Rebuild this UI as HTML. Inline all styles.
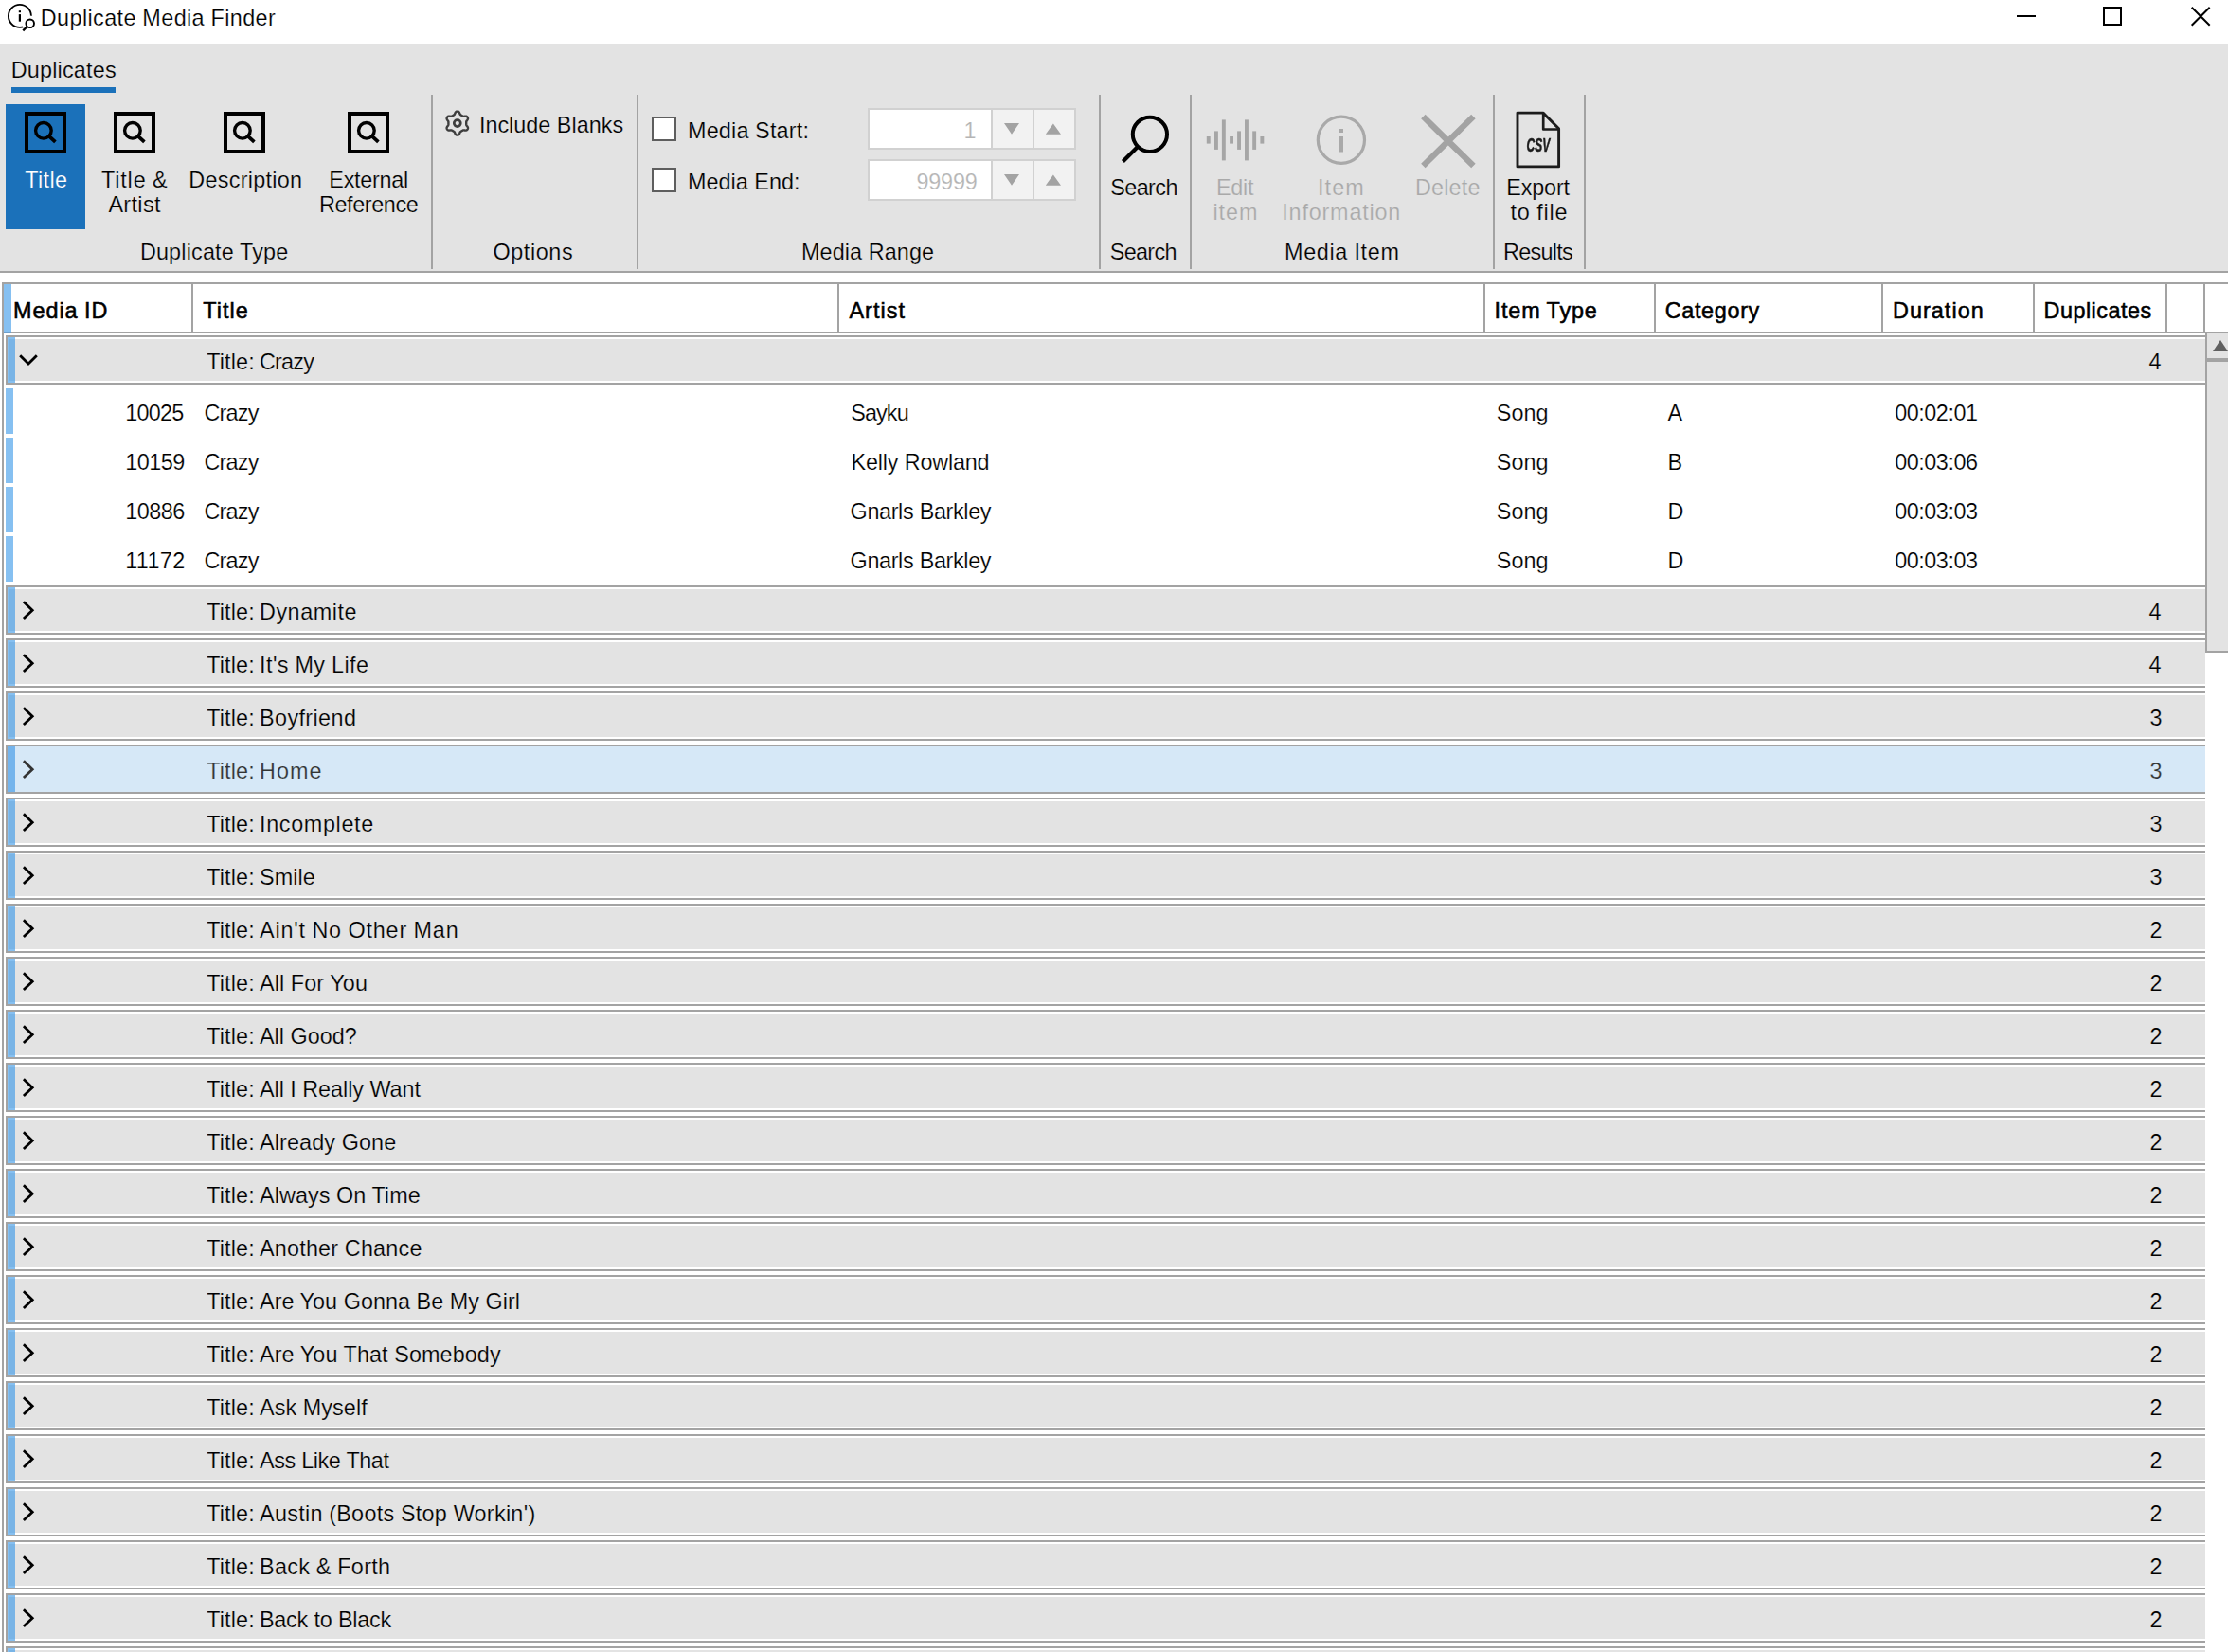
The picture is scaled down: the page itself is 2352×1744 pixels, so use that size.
<!DOCTYPE html>
<html lang="en"><head><meta charset="utf-8"><title>Duplicate Media Finder</title><style>
html,body{margin:0;padding:0}
body{width:2352px;height:1744px;position:relative;overflow:hidden;background:#fff;
font-family:"Liberation Sans",sans-serif;font-size:23.4px;color:#000}
body>div,body>svg,body>span{position:absolute}
.t{white-space:pre;line-height:30px}
</style></head><body>
<div style="left:0px;top:46px;width:2352px;height:240px;background:#e3e3e3;"></div>
<div style="left:0px;top:286px;width:2352px;height:2px;background:#a3a3a3;"></div>
<div style="left:12px;top:92px;width:110px;height:6px;background:#1b71ba;"></div>
<div style="left:6px;top:110px;width:84px;height:132px;background:#1b71ba;"></div>
<div style="left:455px;top:100px;width:2px;height:184px;background:#a3a3a3;"></div>
<div style="left:672px;top:100px;width:2px;height:184px;background:#a3a3a3;"></div>
<div style="left:1160px;top:100px;width:2px;height:184px;background:#a3a3a3;"></div>
<div style="left:1256px;top:100px;width:2px;height:184px;background:#a3a3a3;"></div>
<div style="left:1576px;top:100px;width:2px;height:184px;background:#a3a3a3;"></div>
<div style="left:1672px;top:100px;width:2px;height:184px;background:#a3a3a3;"></div>
<svg style="left:4px;top:0px" width="40" height="40" viewBox="0 0 40 40" >
<g fill="none" stroke="#000" stroke-width="1.9">
<circle cx="16.9" cy="16.9" r="12"/>
<circle cx="27.7" cy="24.8" r="8.3" fill="#fff" stroke="none"/>
<circle cx="27.7" cy="24.8" r="4.3"/>
<path d="M24.6 28 L20.3 32.4" stroke-width="2.4"/>
</g>
<rect x="15.8" y="11.2" width="2.2" height="2" fill="#000"/>
<rect x="15.8" y="15.1" width="2.2" height="7.6" fill="#000"/></svg>
<div style="left:2129px;top:16px;width:20px;height:2px;background:#000;"></div>
<div style="left:2220px;top:7px;width:16px;height:16px;background:transparent;border:2px solid #000;"></div>
<svg style="left:2308px;top:2px" width="30" height="30" viewBox="0 0 30 30" ><path d="M5.7 5.7 L24.7 24.7 M24.7 5.7 L5.7 24.7" stroke="#000" stroke-width="2" fill="none"/></svg>
<svg style="left:26px;top:118px;filter:blur(0.4px)" width="44" height="44" viewBox="0 0 44 44" ><g fill="none" stroke="#000">
<rect x="2" y="2" width="40" height="40" stroke-width="4"/>
<circle cx="19.9" cy="19.8" r="8.3" stroke-width="3.4"/>
<path d="M25.6 25.6 L32.4 31.8" stroke-width="3.8"/></g></svg>
<svg style="left:120px;top:118px;filter:blur(0.4px)" width="44" height="44" viewBox="0 0 44 44" ><g fill="none" stroke="#000">
<rect x="2" y="2" width="40" height="40" stroke-width="4"/>
<circle cx="19.9" cy="19.8" r="8.3" stroke-width="3.4"/>
<path d="M25.6 25.6 L32.4 31.8" stroke-width="3.8"/></g></svg>
<svg style="left:236px;top:118px;filter:blur(0.4px)" width="44" height="44" viewBox="0 0 44 44" ><g fill="none" stroke="#000">
<rect x="2" y="2" width="40" height="40" stroke-width="4"/>
<circle cx="19.9" cy="19.8" r="8.3" stroke-width="3.4"/>
<path d="M25.6 25.6 L32.4 31.8" stroke-width="3.8"/></g></svg>
<svg style="left:367px;top:118px;filter:blur(0.4px)" width="44" height="44" viewBox="0 0 44 44" ><g fill="none" stroke="#000">
<rect x="2" y="2" width="40" height="40" stroke-width="4"/>
<circle cx="19.9" cy="19.8" r="8.3" stroke-width="3.4"/>
<path d="M25.6 25.6 L32.4 31.8" stroke-width="3.8"/></g></svg>
<svg style="left:466px;top:112px;filter:blur(0.4px)" width="34" height="36" viewBox="0 0 34 36" ><g fill="none" stroke="#3e3e3e" stroke-linejoin="round">
<path stroke-width="2.4" d="M26.20 18.10 L26.20 17.77 L26.19 17.44 L26.19 17.11 L26.20 16.78 L26.25 16.43 L26.37 16.07 L26.60 15.66 L26.95 15.19 L27.37 14.66 L27.73 14.12 L27.94 13.60 L28.00 13.11 L27.95 12.66 L27.82 12.24 L27.63 11.85 L27.38 11.49 L27.09 11.16 L26.72 10.89 L26.27 10.70 L25.71 10.62 L25.06 10.66 L24.40 10.76 L23.81 10.84 L23.35 10.83 L22.97 10.75 L22.65 10.62 L22.35 10.46 L22.07 10.29 L21.78 10.13 L21.50 9.96 L21.21 9.80 L20.93 9.64 L20.64 9.47 L20.36 9.29 L20.08 9.08 L19.82 8.80 L19.58 8.39 L19.36 7.85 L19.11 7.23 L18.82 6.65 L18.47 6.20 L18.08 5.90 L17.67 5.72 L17.24 5.63 L16.80 5.60 L16.36 5.63 L15.93 5.72 L15.52 5.90 L15.13 6.20 L14.78 6.65 L14.49 7.23 L14.24 7.85 L14.02 8.39 L13.78 8.80 L13.52 9.08 L13.24 9.29 L12.96 9.47 L12.67 9.64 L12.39 9.80 L12.10 9.96 L11.82 10.13 L11.53 10.29 L11.25 10.46 L10.95 10.62 L10.63 10.75 L10.25 10.83 L9.79 10.84 L9.20 10.76 L8.54 10.66 L7.89 10.62 L7.33 10.70 L6.88 10.89 L6.51 11.16 L6.22 11.49 L5.97 11.85 L5.78 12.24 L5.65 12.66 L5.60 13.11 L5.66 13.60 L5.87 14.12 L6.23 14.66 L6.65 15.19 L7.00 15.66 L7.23 16.07 L7.35 16.43 L7.40 16.78 L7.41 17.11 L7.41 17.44 L7.40 17.77 L7.40 18.10 L7.40 18.43 L7.41 18.76 L7.41 19.09 L7.40 19.42 L7.35 19.77 L7.23 20.13 L7.00 20.54 L6.65 21.01 L6.23 21.54 L5.87 22.08 L5.66 22.60 L5.60 23.09 L5.65 23.54 L5.78 23.96 L5.97 24.35 L6.22 24.71 L6.51 25.04 L6.88 25.31 L7.33 25.50 L7.89 25.58 L8.54 25.54 L9.20 25.44 L9.79 25.36 L10.25 25.37 L10.63 25.45 L10.95 25.58 L11.25 25.74 L11.53 25.91 L11.82 26.07 L12.10 26.24 L12.39 26.40 L12.67 26.56 L12.96 26.73 L13.24 26.91 L13.52 27.12 L13.78 27.40 L14.02 27.81 L14.24 28.35 L14.49 28.97 L14.78 29.55 L15.13 30.00 L15.52 30.30 L15.93 30.48 L16.36 30.57 L16.80 30.60 L17.24 30.57 L17.67 30.48 L18.08 30.30 L18.47 30.00 L18.82 29.55 L19.11 28.97 L19.36 28.35 L19.58 27.81 L19.82 27.40 L20.08 27.12 L20.36 26.91 L20.64 26.73 L20.93 26.56 L21.21 26.40 L21.50 26.24 L21.78 26.07 L22.07 25.91 L22.35 25.74 L22.65 25.58 L22.97 25.45 L23.35 25.37 L23.81 25.36 L24.40 25.44 L25.06 25.54 L25.71 25.58 L26.27 25.50 L26.72 25.31 L27.09 25.04 L27.38 24.71 L27.63 24.35 L27.82 23.96 L27.95 23.54 L28.00 23.09 L27.94 22.60 L27.73 22.08 L27.37 21.54 L26.95 21.01 L26.60 20.54 L26.37 20.13 L26.25 19.77 L26.20 19.42 L26.19 19.09 L26.19 18.76 L26.20 18.43 Z"/><circle cx="16.8" cy="18.1" r="3.5" stroke-width="2.7"/></g></svg>
<div style="left:688px;top:123px;width:22px;height:22px;background:#fff;border:2px solid #5e5e5e;"></div>
<div style="left:688px;top:177px;width:22px;height:22px;background:#fff;border:2px solid #5e5e5e;"></div>
<div style="left:916px;top:114px;width:216px;height:40px;background:#fff;border:2px solid #d1d1d1;"></div>
<div style="left:1046px;top:116px;width:2px;height:40px;background:#d1d1d1;"></div>
<div style="left:1048px;top:116px;width:42px;height:40px;background:#f2f2f2;"></div>
<div style="left:1090px;top:116px;width:2px;height:40px;background:#d1d1d1;"></div>
<div style="left:1092px;top:116px;width:42px;height:40px;background:#f2f2f2;"></div>
<svg style="left:1056px;top:126px" width="70" height="20" viewBox="0 0 70 20" ><path d="M4 4 H20 L12 15.8 Z M47.8 15.8 H64 L55.9 4.4 Z" fill="#a3a3a3"/></svg>
<div style="left:916px;top:168px;width:216px;height:40px;background:#fff;border:2px solid #d1d1d1;"></div>
<div style="left:1046px;top:170px;width:2px;height:40px;background:#d1d1d1;"></div>
<div style="left:1048px;top:170px;width:42px;height:40px;background:#f2f2f2;"></div>
<div style="left:1090px;top:170px;width:2px;height:40px;background:#d1d1d1;"></div>
<div style="left:1092px;top:170px;width:42px;height:40px;background:#f2f2f2;"></div>
<svg style="left:1056px;top:180px" width="70" height="20" viewBox="0 0 70 20" ><path d="M4 4 H20 L12 15.8 Z M47.8 15.8 H64 L55.9 4.4 Z" fill="#a3a3a3"/></svg>
<svg style="left:1176px;top:112px" width="70" height="66" viewBox="0 0 70 66" ><g fill="none" stroke="#000">
<circle cx="37.9" cy="29.8" r="18.1" stroke-width="4"/>
<path d="M25.4 42.4 L9.4 58.4" stroke-width="4.2"/></g></svg>
<svg style="left:1270px;top:120px" width="70" height="56" viewBox="0 0 70 56" ><g fill="#a6a6a6"><rect x="3.8" y="24.0" width="3.9" height="7.6"/><rect x="12.0" y="18.4" width="3.9" height="19.5"/><rect x="19.9" y="6.4" width="3.9" height="43.0"/><rect x="28.1" y="24.0" width="3.9" height="7.6"/><rect x="36.1" y="18.4" width="3.9" height="19.5"/><rect x="44.0" y="6.4" width="3.9" height="43.0"/><rect x="52.2" y="18.4" width="3.9" height="19.5"/><rect x="60.4" y="24.0" width="3.9" height="7.6"/></g></svg>
<svg style="left:1386px;top:118px" width="60" height="60" viewBox="0 0 60 60" ><circle cx="29.9" cy="29.8" r="24.6" fill="none" stroke="#a9a9a9" stroke-width="3.2"/>
<rect x="28" y="18" width="4" height="4" fill="#a9a9a9"/><rect x="28" y="26" width="4" height="16.5" fill="#a9a9a9"/></svg>
<svg style="left:1496px;top:116px" width="66" height="66" viewBox="0 0 66 66" ><path d="M6.4 7 L59.4 59 M59.4 7 L6.4 59" stroke="#a3a3a3" stroke-width="6.4" fill="none"/></svg>
<svg style="left:1596px;top:114px;filter:blur(0.4px)" width="56" height="68" viewBox="0 0 56 68" ><g fill="none" stroke="#1c1c1c" stroke-linejoin="round">
<path d="M6 5.1 H33 L49.6 21.7 V61.9 H6 Z" stroke-width="2.9"/>
<path d="M33.2 5.1 V22.5 H49.6" stroke-width="2.7"/></g>
<text x="15.6" y="45.9" font-family="Liberation Sans, sans-serif" font-weight="700" font-style="italic" font-size="19.6" textLength="24.6" lengthAdjust="spacingAndGlyphs" fill="#1c1c1c" stroke="#1c1c1c" stroke-width="0.55">CSV</text></svg>
<div style="left:2px;top:298px;width:2350px;height:2px;background:#a3a3a3;"></div>
<div style="left:2px;top:298px;width:2px;height:1446px;background:#a3a3a3;"></div>
<div style="left:4px;top:350px;width:2348px;height:2px;background:#a3a3a3;"></div>
<div style="left:4px;top:300px;width:8px;height:50px;background:#86c0f1;"></div>
<div style="left:4px;top:350px;width:8px;height:2px;background:#6d9fcb;"></div>
<div style="left:202px;top:300px;width:2px;height:50px;background:#a3a3a3;"></div>
<div style="left:884px;top:300px;width:2px;height:50px;background:#a3a3a3;"></div>
<div style="left:1566px;top:300px;width:2px;height:50px;background:#a3a3a3;"></div>
<div style="left:1746px;top:300px;width:2px;height:50px;background:#a3a3a3;"></div>
<div style="left:1986px;top:300px;width:2px;height:50px;background:#a3a3a3;"></div>
<div style="left:2146px;top:300px;width:2px;height:50px;background:#a3a3a3;"></div>
<div style="left:2286px;top:300px;width:2px;height:50px;background:#a3a3a3;"></div>
<div style="left:2326px;top:300px;width:2px;height:50px;background:#a3a3a3;"></div>
<div style="left:6px;top:354px;width:2320px;height:48px;border:2px solid #a3a3a3;border-right:0"><div style="position:absolute;left:0;top:0;width:8px;height:48px;background:#86c0f1"></div><div style="position:absolute;left:2px;top:2px;width:6px;height:44px;background:#79b4e6"></div><div style="position:absolute;left:8px;top:2px;right:0;height:44px;background:#e3e3e3"></div></div>
<svg style="left:16px;top:371px" width="28" height="20" viewBox="0 0 28 20" ><path d="M5.2 4.2 L14 13 L22.8 4.2" fill="none" stroke="#000" stroke-width="2.8"/></svg>
<div style="left:6px;top:410px;width:8px;height:48px;background:#86c0f1;"></div>
<div style="left:6px;top:462px;width:8px;height:48px;background:#86c0f1;"></div>
<div style="left:6px;top:514px;width:8px;height:48px;background:#86c0f1;"></div>
<div style="left:6px;top:566px;width:8px;height:48px;background:#86c0f1;"></div>
<div style="left:6px;top:618px;width:2320px;height:48px;border:2px solid #a3a3a3;border-right:0"><div style="position:absolute;left:0;top:0;width:8px;height:48px;background:#86c0f1"></div><div style="position:absolute;left:2px;top:2px;width:6px;height:44px;background:#79b4e6"></div><div style="position:absolute;left:8px;top:2px;right:0;height:44px;background:#e3e3e3"></div></div>
<svg style="left:20px;top:630px" width="20" height="28" viewBox="0 0 20 28" ><path d="M4.9 5.3 L14.2 14.2 L4.9 23.1" fill="none" stroke="#000" stroke-width="2.8"/></svg>
<div style="left:6px;top:674px;width:2320px;height:48px;border:2px solid #a3a3a3;border-right:0"><div style="position:absolute;left:0;top:0;width:8px;height:48px;background:#86c0f1"></div><div style="position:absolute;left:2px;top:2px;width:6px;height:44px;background:#79b4e6"></div><div style="position:absolute;left:8px;top:2px;right:0;height:44px;background:#e3e3e3"></div></div>
<svg style="left:20px;top:686px" width="20" height="28" viewBox="0 0 20 28" ><path d="M4.9 5.3 L14.2 14.2 L4.9 23.1" fill="none" stroke="#000" stroke-width="2.8"/></svg>
<div style="left:6px;top:730px;width:2320px;height:48px;border:2px solid #a3a3a3;border-right:0"><div style="position:absolute;left:0;top:0;width:8px;height:48px;background:#86c0f1"></div><div style="position:absolute;left:2px;top:2px;width:6px;height:44px;background:#79b4e6"></div><div style="position:absolute;left:8px;top:2px;right:0;height:44px;background:#e3e3e3"></div></div>
<svg style="left:20px;top:742px" width="20" height="28" viewBox="0 0 20 28" ><path d="M4.9 5.3 L14.2 14.2 L4.9 23.1" fill="none" stroke="#000" stroke-width="2.8"/></svg>
<div style="left:6px;top:786px;width:2320px;height:48px;border:2px solid #a3a3a3;border-right:0"><div style="position:absolute;left:0;top:0;width:8px;height:48px;background:#74b4ec"></div><div style="position:absolute;left:8px;top:0;right:0;height:48px;background:#d6e8f7"></div></div>
<svg style="left:20px;top:798px" width="20" height="28" viewBox="0 0 20 28" ><path d="M4.9 5.3 L14.2 14.2 L4.9 23.1" fill="none" stroke="#333" stroke-width="2.8"/></svg>
<div style="left:6px;top:842px;width:2320px;height:48px;border:2px solid #a3a3a3;border-right:0"><div style="position:absolute;left:0;top:0;width:8px;height:48px;background:#86c0f1"></div><div style="position:absolute;left:2px;top:2px;width:6px;height:44px;background:#79b4e6"></div><div style="position:absolute;left:8px;top:2px;right:0;height:44px;background:#e3e3e3"></div></div>
<svg style="left:20px;top:854px" width="20" height="28" viewBox="0 0 20 28" ><path d="M4.9 5.3 L14.2 14.2 L4.9 23.1" fill="none" stroke="#000" stroke-width="2.8"/></svg>
<div style="left:6px;top:898px;width:2320px;height:48px;border:2px solid #a3a3a3;border-right:0"><div style="position:absolute;left:0;top:0;width:8px;height:48px;background:#86c0f1"></div><div style="position:absolute;left:2px;top:2px;width:6px;height:44px;background:#79b4e6"></div><div style="position:absolute;left:8px;top:2px;right:0;height:44px;background:#e3e3e3"></div></div>
<svg style="left:20px;top:910px" width="20" height="28" viewBox="0 0 20 28" ><path d="M4.9 5.3 L14.2 14.2 L4.9 23.1" fill="none" stroke="#000" stroke-width="2.8"/></svg>
<div style="left:6px;top:954px;width:2320px;height:48px;border:2px solid #a3a3a3;border-right:0"><div style="position:absolute;left:0;top:0;width:8px;height:48px;background:#86c0f1"></div><div style="position:absolute;left:2px;top:2px;width:6px;height:44px;background:#79b4e6"></div><div style="position:absolute;left:8px;top:2px;right:0;height:44px;background:#e3e3e3"></div></div>
<svg style="left:20px;top:966px" width="20" height="28" viewBox="0 0 20 28" ><path d="M4.9 5.3 L14.2 14.2 L4.9 23.1" fill="none" stroke="#000" stroke-width="2.8"/></svg>
<div style="left:6px;top:1010px;width:2320px;height:48px;border:2px solid #a3a3a3;border-right:0"><div style="position:absolute;left:0;top:0;width:8px;height:48px;background:#86c0f1"></div><div style="position:absolute;left:2px;top:2px;width:6px;height:44px;background:#79b4e6"></div><div style="position:absolute;left:8px;top:2px;right:0;height:44px;background:#e3e3e3"></div></div>
<svg style="left:20px;top:1022px" width="20" height="28" viewBox="0 0 20 28" ><path d="M4.9 5.3 L14.2 14.2 L4.9 23.1" fill="none" stroke="#000" stroke-width="2.8"/></svg>
<div style="left:6px;top:1066px;width:2320px;height:48px;border:2px solid #a3a3a3;border-right:0"><div style="position:absolute;left:0;top:0;width:8px;height:48px;background:#86c0f1"></div><div style="position:absolute;left:2px;top:2px;width:6px;height:44px;background:#79b4e6"></div><div style="position:absolute;left:8px;top:2px;right:0;height:44px;background:#e3e3e3"></div></div>
<svg style="left:20px;top:1078px" width="20" height="28" viewBox="0 0 20 28" ><path d="M4.9 5.3 L14.2 14.2 L4.9 23.1" fill="none" stroke="#000" stroke-width="2.8"/></svg>
<div style="left:6px;top:1122px;width:2320px;height:48px;border:2px solid #a3a3a3;border-right:0"><div style="position:absolute;left:0;top:0;width:8px;height:48px;background:#86c0f1"></div><div style="position:absolute;left:2px;top:2px;width:6px;height:44px;background:#79b4e6"></div><div style="position:absolute;left:8px;top:2px;right:0;height:44px;background:#e3e3e3"></div></div>
<svg style="left:20px;top:1134px" width="20" height="28" viewBox="0 0 20 28" ><path d="M4.9 5.3 L14.2 14.2 L4.9 23.1" fill="none" stroke="#000" stroke-width="2.8"/></svg>
<div style="left:6px;top:1178px;width:2320px;height:48px;border:2px solid #a3a3a3;border-right:0"><div style="position:absolute;left:0;top:0;width:8px;height:48px;background:#86c0f1"></div><div style="position:absolute;left:2px;top:2px;width:6px;height:44px;background:#79b4e6"></div><div style="position:absolute;left:8px;top:2px;right:0;height:44px;background:#e3e3e3"></div></div>
<svg style="left:20px;top:1190px" width="20" height="28" viewBox="0 0 20 28" ><path d="M4.9 5.3 L14.2 14.2 L4.9 23.1" fill="none" stroke="#000" stroke-width="2.8"/></svg>
<div style="left:6px;top:1234px;width:2320px;height:48px;border:2px solid #a3a3a3;border-right:0"><div style="position:absolute;left:0;top:0;width:8px;height:48px;background:#86c0f1"></div><div style="position:absolute;left:2px;top:2px;width:6px;height:44px;background:#79b4e6"></div><div style="position:absolute;left:8px;top:2px;right:0;height:44px;background:#e3e3e3"></div></div>
<svg style="left:20px;top:1246px" width="20" height="28" viewBox="0 0 20 28" ><path d="M4.9 5.3 L14.2 14.2 L4.9 23.1" fill="none" stroke="#000" stroke-width="2.8"/></svg>
<div style="left:6px;top:1290px;width:2320px;height:48px;border:2px solid #a3a3a3;border-right:0"><div style="position:absolute;left:0;top:0;width:8px;height:48px;background:#86c0f1"></div><div style="position:absolute;left:2px;top:2px;width:6px;height:44px;background:#79b4e6"></div><div style="position:absolute;left:8px;top:2px;right:0;height:44px;background:#e3e3e3"></div></div>
<svg style="left:20px;top:1302px" width="20" height="28" viewBox="0 0 20 28" ><path d="M4.9 5.3 L14.2 14.2 L4.9 23.1" fill="none" stroke="#000" stroke-width="2.8"/></svg>
<div style="left:6px;top:1346px;width:2320px;height:48px;border:2px solid #a3a3a3;border-right:0"><div style="position:absolute;left:0;top:0;width:8px;height:48px;background:#86c0f1"></div><div style="position:absolute;left:2px;top:2px;width:6px;height:44px;background:#79b4e6"></div><div style="position:absolute;left:8px;top:2px;right:0;height:44px;background:#e3e3e3"></div></div>
<svg style="left:20px;top:1358px" width="20" height="28" viewBox="0 0 20 28" ><path d="M4.9 5.3 L14.2 14.2 L4.9 23.1" fill="none" stroke="#000" stroke-width="2.8"/></svg>
<div style="left:6px;top:1402px;width:2320px;height:48px;border:2px solid #a3a3a3;border-right:0"><div style="position:absolute;left:0;top:0;width:8px;height:48px;background:#86c0f1"></div><div style="position:absolute;left:2px;top:2px;width:6px;height:44px;background:#79b4e6"></div><div style="position:absolute;left:8px;top:2px;right:0;height:44px;background:#e3e3e3"></div></div>
<svg style="left:20px;top:1414px" width="20" height="28" viewBox="0 0 20 28" ><path d="M4.9 5.3 L14.2 14.2 L4.9 23.1" fill="none" stroke="#000" stroke-width="2.8"/></svg>
<div style="left:6px;top:1458px;width:2320px;height:48px;border:2px solid #a3a3a3;border-right:0"><div style="position:absolute;left:0;top:0;width:8px;height:48px;background:#86c0f1"></div><div style="position:absolute;left:2px;top:2px;width:6px;height:44px;background:#79b4e6"></div><div style="position:absolute;left:8px;top:2px;right:0;height:44px;background:#e3e3e3"></div></div>
<svg style="left:20px;top:1470px" width="20" height="28" viewBox="0 0 20 28" ><path d="M4.9 5.3 L14.2 14.2 L4.9 23.1" fill="none" stroke="#000" stroke-width="2.8"/></svg>
<div style="left:6px;top:1514px;width:2320px;height:48px;border:2px solid #a3a3a3;border-right:0"><div style="position:absolute;left:0;top:0;width:8px;height:48px;background:#86c0f1"></div><div style="position:absolute;left:2px;top:2px;width:6px;height:44px;background:#79b4e6"></div><div style="position:absolute;left:8px;top:2px;right:0;height:44px;background:#e3e3e3"></div></div>
<svg style="left:20px;top:1526px" width="20" height="28" viewBox="0 0 20 28" ><path d="M4.9 5.3 L14.2 14.2 L4.9 23.1" fill="none" stroke="#000" stroke-width="2.8"/></svg>
<div style="left:6px;top:1570px;width:2320px;height:48px;border:2px solid #a3a3a3;border-right:0"><div style="position:absolute;left:0;top:0;width:8px;height:48px;background:#86c0f1"></div><div style="position:absolute;left:2px;top:2px;width:6px;height:44px;background:#79b4e6"></div><div style="position:absolute;left:8px;top:2px;right:0;height:44px;background:#e3e3e3"></div></div>
<svg style="left:20px;top:1582px" width="20" height="28" viewBox="0 0 20 28" ><path d="M4.9 5.3 L14.2 14.2 L4.9 23.1" fill="none" stroke="#000" stroke-width="2.8"/></svg>
<div style="left:6px;top:1626px;width:2320px;height:48px;border:2px solid #a3a3a3;border-right:0"><div style="position:absolute;left:0;top:0;width:8px;height:48px;background:#86c0f1"></div><div style="position:absolute;left:2px;top:2px;width:6px;height:44px;background:#79b4e6"></div><div style="position:absolute;left:8px;top:2px;right:0;height:44px;background:#e3e3e3"></div></div>
<svg style="left:20px;top:1638px" width="20" height="28" viewBox="0 0 20 28" ><path d="M4.9 5.3 L14.2 14.2 L4.9 23.1" fill="none" stroke="#000" stroke-width="2.8"/></svg>
<div style="left:6px;top:1682px;width:2320px;height:48px;border:2px solid #a3a3a3;border-right:0"><div style="position:absolute;left:0;top:0;width:8px;height:48px;background:#86c0f1"></div><div style="position:absolute;left:2px;top:2px;width:6px;height:44px;background:#79b4e6"></div><div style="position:absolute;left:8px;top:2px;right:0;height:44px;background:#e3e3e3"></div></div>
<svg style="left:20px;top:1694px" width="20" height="28" viewBox="0 0 20 28" ><path d="M4.9 5.3 L14.2 14.2 L4.9 23.1" fill="none" stroke="#000" stroke-width="2.8"/></svg>
<div style="left:6px;top:1738px;width:2320px;height:48px;border:2px solid #a3a3a3;border-right:0"><div style="position:absolute;left:0;top:0;width:8px;height:48px;background:#86c0f1"></div><div style="position:absolute;left:2px;top:2px;width:6px;height:44px;background:#79b4e6"></div><div style="position:absolute;left:8px;top:2px;right:0;height:44px;background:#e3e3e3"></div></div>
<svg style="left:20px;top:1750px" width="20" height="28" viewBox="0 0 20 28" ><path d="M4.9 5.3 L14.2 14.2 L4.9 23.1" fill="none" stroke="#000" stroke-width="2.8"/></svg>
<div style="left:2328px;top:352px;width:2px;height:337px;background:#a3a3a3;"></div>
<div style="left:2330px;top:352px;width:22px;height:335px;background:#e3e3e3;"></div>
<div style="left:2330px;top:378px;width:22px;height:4px;background:#a3a3a3;"></div>
<div style="left:2330px;top:687px;width:22px;height:2px;background:#a3a3a3;"></div>
<svg style="left:2330px;top:354px" width="22" height="22" viewBox="0 0 22 22" ><path d="M6 17 L14 5 L22 17 Z" fill="#606060"/></svg>
<span class="t" style="left:42.80px;top:4px;letter-spacing:0.393px;word-spacing:-0.393px;-webkit-text-stroke:0.2px #fff;">Duplicate Media Finder</span>
<span class="t" style="left:11.70px;top:59px;letter-spacing:0.198px;-webkit-text-stroke:0.2px #e3e3e3;">Duplicates</span>
<span class="t" style="left:26.20px;top:175px;color:#fff;letter-spacing:0.397px;-webkit-text-stroke:0.2px #1b71ba;">Title</span>
<span class="t" style="left:107.00px;top:175px;letter-spacing:0.836px;word-spacing:-0.836px;-webkit-text-stroke:0.2px #e3e3e3;">Title &amp;</span>
<span class="t" style="left:114.40px;top:201px;letter-spacing:0.364px;-webkit-text-stroke:0.2px #e3e3e3;">Artist</span>
<span class="t" style="left:199.30px;top:175px;letter-spacing:0.271px;-webkit-text-stroke:0.2px #e3e3e3;">Description</span>
<span class="t" style="left:347.30px;top:175px;letter-spacing:-0.273px;-webkit-text-stroke:0.2px #e3e3e3;">External</span>
<span class="t" style="left:337.00px;top:201px;letter-spacing:-0.401px;-webkit-text-stroke:0.2px #e3e3e3;">Reference</span>
<span class="t" style="left:147.90px;top:251px;letter-spacing:0.166px;word-spacing:-0.166px;-webkit-text-stroke:0.2px #e3e3e3;">Duplicate Type</span>
<span class="t" style="left:505.90px;top:117px;letter-spacing:0.005px;word-spacing:-0.005px;-webkit-text-stroke:0.2px #e3e3e3;">Include Blanks</span>
<span class="t" style="left:520.40px;top:251px;letter-spacing:0.614px;-webkit-text-stroke:0.2px #e3e3e3;">Options</span>
<span class="t" style="left:726.00px;top:123px;letter-spacing:0.180px;word-spacing:-0.180px;-webkit-text-stroke:0.2px #e3e3e3;">Media Start:</span>
<span class="t" style="left:726.00px;top:177px;letter-spacing:0.022px;word-spacing:-0.022px;-webkit-text-stroke:0.2px #e3e3e3;">Media End:</span>
<span class="t" style="left:1017.40px;top:123px;color:#b4b4b4;-webkit-text-stroke:0.2px #fff;">1</span>
<span class="t" style="left:967.50px;top:177px;color:#b4b4b4;letter-spacing:-0.209px;-webkit-text-stroke:0.2px #fff;">99999</span>
<span class="t" style="left:846.00px;top:251px;letter-spacing:0.097px;word-spacing:-0.097px;-webkit-text-stroke:0.2px #e3e3e3;">Media Range</span>
<span class="t" style="left:1172.30px;top:183px;letter-spacing:-0.601px;-webkit-text-stroke:0.2px #e3e3e3;">Search</span>
<span class="t" style="left:1171.70px;top:251px;letter-spacing:-0.661px;-webkit-text-stroke:0.2px #e3e3e3;">Search</span>
<span class="t" style="left:1284.00px;top:183px;color:#a9a9a9;letter-spacing:-0.269px;-webkit-text-stroke:0.2px #e3e3e3;">Edit</span>
<span class="t" style="left:1280.40px;top:209px;color:#a9a9a9;letter-spacing:0.965px;-webkit-text-stroke:0.2px #e3e3e3;">item</span>
<span class="t" style="left:1391.00px;top:183px;color:#a9a9a9;letter-spacing:1.065px;-webkit-text-stroke:0.2px #e3e3e3;">Item</span>
<span class="t" style="left:1353.30px;top:209px;color:#a9a9a9;letter-spacing:0.800px;-webkit-text-stroke:0.2px #e3e3e3;">Information</span>
<span class="t" style="left:1494.10px;top:183px;color:#a9a9a9;letter-spacing:0.139px;-webkit-text-stroke:0.2px #e3e3e3;">Delete</span>
<span class="t" style="left:1590.30px;top:183px;letter-spacing:-0.181px;-webkit-text-stroke:0.2px #e3e3e3;">Export</span>
<span class="t" style="left:1594.50px;top:209px;letter-spacing:0.820px;word-spacing:-0.820px;-webkit-text-stroke:0.2px #e3e3e3;">to file</span>
<span class="t" style="left:1356.00px;top:251px;letter-spacing:0.648px;word-spacing:-0.648px;-webkit-text-stroke:0.2px #e3e3e3;">Media Item</span>
<span class="t" style="left:1587.00px;top:251px;letter-spacing:-0.717px;-webkit-text-stroke:0.2px #e3e3e3;">Results</span>
<span class="t" style="left:14.00px;top:313px;letter-spacing:0.966px;word-spacing:-0.966px;-webkit-text-stroke:0.55px #000;">Media ID</span>
<span class="t" style="left:214.30px;top:313px;letter-spacing:1.047px;-webkit-text-stroke:0.55px #000;">Title</span>
<span class="t" style="left:896.40px;top:313px;letter-spacing:1.064px;-webkit-text-stroke:0.55px #000;">Artist</span>
<span class="t" style="left:1577.60px;top:313px;letter-spacing:0.844px;word-spacing:-0.844px;-webkit-text-stroke:0.55px #000;">Item Type</span>
<span class="t" style="left:1757.70px;top:313px;letter-spacing:0.669px;-webkit-text-stroke:0.55px #000;">Category</span>
<span class="t" style="left:1998.00px;top:313px;letter-spacing:1.042px;-webkit-text-stroke:0.55px #000;">Duration</span>
<span class="t" style="left:2157.50px;top:313px;letter-spacing:0.498px;-webkit-text-stroke:0.55px #000;">Duplicates</span>
<span class="t" style="left:2268.60px;top:367px;-webkit-text-stroke:0.2px #e3e3e3;">4</span>
<span class="t" style="left:132.20px;top:421px;letter-spacing:-0.759px;-webkit-text-stroke:0.2px #fff;">10025</span>
<span class="t" style="left:215.50px;top:421px;letter-spacing:-0.796px;-webkit-text-stroke:0.2px #fff;">Crazy</span>
<span class="t" style="left:898.20px;top:421px;letter-spacing:-0.875px;-webkit-text-stroke:0.2px #fff;">Sayku</span>
<span class="t" style="left:1579.80px;top:421px;letter-spacing:0.060px;-webkit-text-stroke:0.2px #fff;">Song</span>
<span class="t" style="left:1760.60px;top:421px;-webkit-text-stroke:0.2px #fff;">A</span>
<span class="t" style="left:2000.20px;top:421px;letter-spacing:-0.463px;-webkit-text-stroke:0.2px #fff;">00:02:01</span>
<span class="t" style="left:132.20px;top:473px;letter-spacing:-0.509px;-webkit-text-stroke:0.2px #fff;">10159</span>
<span class="t" style="left:215.50px;top:473px;letter-spacing:-0.796px;-webkit-text-stroke:0.2px #fff;">Crazy</span>
<span class="t" style="left:898.60px;top:473px;letter-spacing:-0.200px;word-spacing:0.200px;-webkit-text-stroke:0.2px #fff;">Kelly Rowland</span>
<span class="t" style="left:1579.80px;top:473px;letter-spacing:0.060px;-webkit-text-stroke:0.2px #fff;">Song</span>
<span class="t" style="left:1760.60px;top:473px;-webkit-text-stroke:0.2px #fff;">B</span>
<span class="t" style="left:2000.20px;top:473px;letter-spacing:-0.463px;-webkit-text-stroke:0.2px #fff;">00:03:06</span>
<span class="t" style="left:132.20px;top:525px;letter-spacing:-0.509px;-webkit-text-stroke:0.2px #fff;">10886</span>
<span class="t" style="left:215.50px;top:525px;letter-spacing:-0.796px;-webkit-text-stroke:0.2px #fff;">Crazy</span>
<span class="t" style="left:897.60px;top:525px;letter-spacing:-0.374px;word-spacing:0.374px;-webkit-text-stroke:0.2px #fff;">Gnarls Barkley</span>
<span class="t" style="left:1579.80px;top:525px;letter-spacing:0.060px;-webkit-text-stroke:0.2px #fff;">Song</span>
<span class="t" style="left:1760.60px;top:525px;-webkit-text-stroke:0.2px #fff;">D</span>
<span class="t" style="left:2000.20px;top:525px;letter-spacing:-0.463px;-webkit-text-stroke:0.2px #fff;">00:03:03</span>
<span class="t" style="left:132.20px;top:577px;letter-spacing:0.360px;-webkit-text-stroke:0.2px #fff;">11172</span>
<span class="t" style="left:215.50px;top:577px;letter-spacing:-0.796px;-webkit-text-stroke:0.2px #fff;">Crazy</span>
<span class="t" style="left:897.60px;top:577px;letter-spacing:-0.374px;word-spacing:0.374px;-webkit-text-stroke:0.2px #fff;">Gnarls Barkley</span>
<span class="t" style="left:1579.80px;top:577px;letter-spacing:0.060px;-webkit-text-stroke:0.2px #fff;">Song</span>
<span class="t" style="left:1760.60px;top:577px;-webkit-text-stroke:0.2px #fff;">D</span>
<span class="t" style="left:2000.20px;top:577px;letter-spacing:-0.463px;-webkit-text-stroke:0.2px #fff;">00:03:03</span>
<span class="t" style="left:2268.60px;top:631px;-webkit-text-stroke:0.2px #e3e3e3;">4</span>
<span class="t" style="left:2268.60px;top:687px;-webkit-text-stroke:0.2px #e3e3e3;">4</span>
<span class="t" style="left:2269.60px;top:743px;-webkit-text-stroke:0.2px #e3e3e3;">3</span>
<span class="t" style="left:2269.60px;top:799px;color:#333;-webkit-text-stroke:0.2px #d6e8f7;">3</span>
<span class="t" style="left:2269.60px;top:855px;-webkit-text-stroke:0.2px #e3e3e3;">3</span>
<span class="t" style="left:2269.60px;top:911px;-webkit-text-stroke:0.2px #e3e3e3;">3</span>
<span class="t" style="left:2269.60px;top:967px;-webkit-text-stroke:0.2px #e3e3e3;">2</span>
<span class="t" style="left:2269.60px;top:1023px;-webkit-text-stroke:0.2px #e3e3e3;">2</span>
<span class="t" style="left:2269.60px;top:1079px;-webkit-text-stroke:0.2px #e3e3e3;">2</span>
<span class="t" style="left:2269.60px;top:1135px;-webkit-text-stroke:0.2px #e3e3e3;">2</span>
<span class="t" style="left:2269.60px;top:1191px;-webkit-text-stroke:0.2px #e3e3e3;">2</span>
<span class="t" style="left:2269.60px;top:1247px;-webkit-text-stroke:0.2px #e3e3e3;">2</span>
<span class="t" style="left:2269.60px;top:1303px;-webkit-text-stroke:0.2px #e3e3e3;">2</span>
<span class="t" style="left:2269.60px;top:1359px;-webkit-text-stroke:0.2px #e3e3e3;">2</span>
<span class="t" style="left:2269.60px;top:1415px;-webkit-text-stroke:0.2px #e3e3e3;">2</span>
<span class="t" style="left:2269.60px;top:1471px;-webkit-text-stroke:0.2px #e3e3e3;">2</span>
<span class="t" style="left:2269.60px;top:1527px;-webkit-text-stroke:0.2px #e3e3e3;">2</span>
<span class="t" style="left:2269.60px;top:1583px;-webkit-text-stroke:0.2px #e3e3e3;">2</span>
<span class="t" style="left:2269.60px;top:1639px;-webkit-text-stroke:0.2px #e3e3e3;">2</span>
<span class="t" style="left:2269.60px;top:1695px;-webkit-text-stroke:0.2px #e3e3e3;">2</span>
<span class="t" style="left:218.20px;top:367px;-webkit-text-stroke:0.2px #e3e3e3;"><span style="letter-spacing:0.136px">Title:</span><span style="letter-spacing:-1.333px"> </span><span style="letter-spacing:-0.796px;word-spacing:0.796px">Crazy</span></span>
<span class="t" style="left:218.20px;top:631px;-webkit-text-stroke:0.2px #e3e3e3;"><span style="letter-spacing:0.136px">Title:</span><span style="letter-spacing:-1.333px"> </span><span style="letter-spacing:0.516px;word-spacing:-0.516px">Dynamite</span></span>
<span class="t" style="left:218.20px;top:687px;-webkit-text-stroke:0.2px #e3e3e3;"><span style="letter-spacing:0.136px">Title:</span><span style="letter-spacing:-1.333px"> </span><span style="letter-spacing:0.440px;word-spacing:-0.440px">It&#x27;s My Life</span></span>
<span class="t" style="left:218.20px;top:743px;-webkit-text-stroke:0.2px #e3e3e3;"><span style="letter-spacing:0.136px">Title:</span><span style="letter-spacing:-1.333px"> </span><span style="letter-spacing:0.387px;word-spacing:-0.387px">Boyfriend</span></span>
<span class="t" style="left:218.20px;top:799px;color:#333;-webkit-text-stroke:0.2px #d6e8f7;"><span style="letter-spacing:0.136px">Title:</span><span style="letter-spacing:-1.333px"> </span><span style="letter-spacing:1.038px;word-spacing:-1.038px">Home</span></span>
<span class="t" style="left:218.20px;top:855px;-webkit-text-stroke:0.2px #e3e3e3;"><span style="letter-spacing:0.136px">Title:</span><span style="letter-spacing:-1.333px"> </span><span style="letter-spacing:0.643px;word-spacing:-0.643px">Incomplete</span></span>
<span class="t" style="left:218.20px;top:911px;-webkit-text-stroke:0.2px #e3e3e3;"><span style="letter-spacing:0.136px">Title:</span><span style="letter-spacing:-1.333px"> </span><span style="letter-spacing:0.055px;word-spacing:-0.055px">Smile</span></span>
<span class="t" style="left:218.20px;top:967px;-webkit-text-stroke:0.2px #e3e3e3;"><span style="letter-spacing:0.136px">Title:</span><span style="letter-spacing:-1.333px"> </span><span style="letter-spacing:0.824px;word-spacing:-0.824px">Ain&#x27;t No Other Man</span></span>
<span class="t" style="left:218.20px;top:1023px;-webkit-text-stroke:0.2px #e3e3e3;"><span style="letter-spacing:0.136px">Title:</span><span style="letter-spacing:-1.333px"> </span><span style="letter-spacing:0.095px;word-spacing:-0.095px">All For You</span></span>
<span class="t" style="left:218.20px;top:1079px;-webkit-text-stroke:0.2px #e3e3e3;"><span style="letter-spacing:0.136px">Title:</span><span style="letter-spacing:-1.333px"> </span><span style="letter-spacing:-0.002px;word-spacing:0.002px">All Good?</span></span>
<span class="t" style="left:218.20px;top:1135px;-webkit-text-stroke:0.2px #e3e3e3;"><span style="letter-spacing:0.136px">Title:</span><span style="letter-spacing:-1.333px"> </span><span style="letter-spacing:-0.055px;word-spacing:0.055px">All I Really Want</span></span>
<span class="t" style="left:218.20px;top:1191px;-webkit-text-stroke:0.2px #e3e3e3;"><span style="letter-spacing:0.136px">Title:</span><span style="letter-spacing:-1.333px"> </span><span style="letter-spacing:0.118px;word-spacing:-0.118px">Already Gone</span></span>
<span class="t" style="left:218.20px;top:1247px;-webkit-text-stroke:0.2px #e3e3e3;"><span style="letter-spacing:0.136px">Title:</span><span style="letter-spacing:-1.333px"> </span><span style="letter-spacing:0.065px;word-spacing:-0.065px">Always On Time</span></span>
<span class="t" style="left:218.20px;top:1303px;-webkit-text-stroke:0.2px #e3e3e3;"><span style="letter-spacing:0.136px">Title:</span><span style="letter-spacing:-1.333px"> </span><span style="letter-spacing:0.197px;word-spacing:-0.197px">Another Chance</span></span>
<span class="t" style="left:218.20px;top:1359px;-webkit-text-stroke:0.2px #e3e3e3;"><span style="letter-spacing:0.136px">Title:</span><span style="letter-spacing:-1.333px"> </span><span style="letter-spacing:0.035px;word-spacing:-0.035px">Are You Gonna Be My Girl</span></span>
<span class="t" style="left:218.20px;top:1415px;-webkit-text-stroke:0.2px #e3e3e3;"><span style="letter-spacing:0.136px">Title:</span><span style="letter-spacing:-1.333px"> </span><span style="letter-spacing:0.088px;word-spacing:-0.088px">Are You That Somebody</span></span>
<span class="t" style="left:218.20px;top:1471px;-webkit-text-stroke:0.2px #e3e3e3;"><span style="letter-spacing:0.136px">Title:</span><span style="letter-spacing:-1.333px"> </span><span style="letter-spacing:0.079px;word-spacing:-0.079px">Ask Myself</span></span>
<span class="t" style="left:218.20px;top:1527px;-webkit-text-stroke:0.2px #e3e3e3;"><span style="letter-spacing:0.136px">Title:</span><span style="letter-spacing:-1.333px"> </span><span style="letter-spacing:-0.440px;word-spacing:0.440px">Ass Like That</span></span>
<span class="t" style="left:218.20px;top:1583px;-webkit-text-stroke:0.2px #e3e3e3;"><span style="letter-spacing:0.136px">Title:</span><span style="letter-spacing:-1.333px"> </span><span style="letter-spacing:0.276px;word-spacing:-0.276px">Austin (Boots Stop Workin&#x27;)</span></span>
<span class="t" style="left:218.20px;top:1639px;-webkit-text-stroke:0.2px #e3e3e3;"><span style="letter-spacing:0.136px">Title:</span><span style="letter-spacing:-1.333px"> </span><span style="letter-spacing:0.324px;word-spacing:-0.324px">Back &amp; Forth</span></span>
<span class="t" style="left:218.20px;top:1695px;-webkit-text-stroke:0.2px #e3e3e3;"><span style="letter-spacing:0.136px">Title:</span><span style="letter-spacing:-1.333px"> </span><span style="letter-spacing:-0.261px;word-spacing:0.261px">Back to Black</span></span>
</body></html>
